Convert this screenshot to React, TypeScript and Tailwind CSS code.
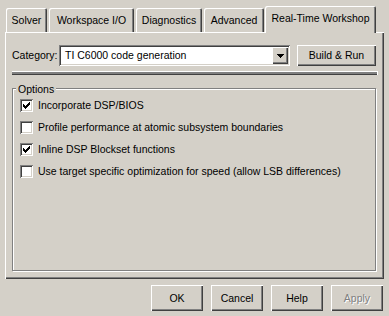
import React from 'react';

const raised =
  'shadow-[inset_1px_1px_0_#ffffff,inset_-1px_-1px_0_#404040,inset_-2px_-2px_0_#808080]';
const sunken =
  'shadow-[inset_1px_1px_0_#808080,inset_-1px_-1px_0_#ffffff,inset_2px_2px_0_#404040,inset_-2px_-2px_0_#d4d0c8]';

const tabs = [
  { name: 'Solver', w: 'w-[41px]', ml: 'ml-[1px]' },
  { name: 'Workspace I/O', w: 'w-[85px]', ml: 'ml-[2px]' },
  { name: 'Diagnostics', w: 'w-[66px]', ml: 'ml-[2px]' },
  { name: 'Advanced', w: 'w-[60px]', ml: 'ml-[2px]' },
];

const options = [
  { label: 'Incorporate DSP/BIOS', checked: true },
  { label: 'Profile performance at atomic subsystem boundaries', checked: false },
  { label: 'Inline DSP Blockset functions', checked: true },
  { label: 'Use target specific optimization for speed (allow LSB differences)', checked: false },
];

const Checkbox = ({ checked }: { checked: boolean }) => (
  <div className={`w-[13px] h-[13px] bg-white ${sunken} flex items-center justify-center shrink-0`}>
    {checked && (
      <svg width="7" height="7" viewBox="0 0 7 7" shapeRendering="crispEdges">
        <path d="M0 2h1v1h-1zM1 3h1v1h-1zM2 4h1v1h-1zM3 3h1v1h-1zM4 2h1v1h-1zM5 1h1v1h-1zM6 0h1v1h-1z" fill="#000" />
        <path d="M0 3h1v1h-1zM1 4h1v1h-1zM2 5h1v1h-1zM3 4h1v1h-1zM4 3h1v1h-1zM5 2h1v1h-1zM6 1h1v1h-1z" fill="#000" />
        <path d="M0 4h1v1h-1zM1 5h1v1h-1zM2 6h1v1h-1zM3 5h1v1h-1zM4 4h1v1h-1zM5 3h1v1h-1zM6 2h1v1h-1z" fill="#000" />
      </svg>
    )}
  </div>
);

export default function App() {
  return (
    <div
      className="w-[389px] h-[316px] bg-[#d4d0c8] text-[10.5px] text-black leading-none flex flex-col overflow-hidden"
      style={{ fontFamily: '"Liberation Sans", Arial, sans-serif' }}
    >
      {/* Tabs */}
      <div className="h-[26px] mt-[6px] flex items-end pl-[5px]">
        {tabs.map((t) => (
          <div
            key={t.name}
            className={`${t.w} ${t.ml} h-[24px] flex items-center justify-center rounded-t-[2px] shadow-[inset_1px_1px_0_#ffffff,inset_-1px_0_0_#404040,inset_-2px_0_0_#808080]`}
          >
            {t.name}
          </div>
        ))}
        <div className="w-[111px] ml-[1px] h-[27px] -mb-[1px] relative z-10 bg-[#d4d0c8] flex items-center justify-center pb-[2px] rounded-t-[2px] shadow-[inset_1px_1px_0_#ffffff,inset_-1px_0_0_#404040,inset_-2px_0_0_#808080]">
          Real-Time Workshop
        </div>
      </div>

      {/* Panel */}
      <div className="ml-[5px] w-[379px] h-[247px] shadow-[inset_1px_1px_0_#ffffff,inset_-1px_-1px_0_#404040,inset_-2px_-2px_0_#808080] pt-[13px] px-[7px] flex flex-col">
        <div className="flex items-center h-[21px]">
          <div className="w-[47px]">Category:</div>
          <div className={`w-[231px] h-[21px] bg-white ${sunken} flex items-center pl-[6px] pr-[2px]`}>
            <span className="flex-1">TI C6000 code generation</span>
            <div className={`w-[16px] h-[17px] bg-[#d4d0c8] ${raised} flex items-center justify-center`}>
              <svg width="7" height="4" viewBox="0 0 7 4" shapeRendering="crispEdges">
                <path d="M0 0h7L3.5 4z" fill="#000" />
              </svg>
            </div>
          </div>
          <div className={`ml-[7px] w-[79px] h-[21px] ${raised} flex items-center justify-center`}>
            Build &amp; Run
          </div>
        </div>

        <div className="mt-[5px] w-[365px] h-[4px] border-t border-white bg-[#808080] border-b border-b-[#404040] shadow-[1px_0_0_#ffffff]" />

        {/* Options group */}
        <div className="relative mt-[13px] w-[364px] h-[183px] border border-[#808080] shadow-[inset_1px_1px_0_#ffffff,1px_1px_0_#ffffff] pt-[10px] pl-[7px]">
          <div className="absolute -top-[6px] left-[3px] px-[2px] bg-[#d4d0c8] leading-[12px]">Options</div>
          <div className="flex flex-col gap-[9px]">
            {options.map((o) => (
              <div key={o.label} className="flex items-center gap-[5px] h-[13px]">
                <Checkbox checked={o.checked} />
                <span>{o.label}</span>
              </div>
            ))}
          </div>
        </div>
      </div>

      {/* Buttons */}
      <div className="mt-[6px] flex justify-end gap-[8px] pr-[6px]">
        {['OK', 'Cancel', 'Help'].map((b) => (
          <div key={b} className={`w-[52px] h-[26px] ${raised} flex items-center justify-center`}>
            {b}
          </div>
        ))}
        <div className={`w-[52px] h-[26px] ${raised} flex items-center justify-center text-[#808080] [text-shadow:1px_1px_0_#ffffff]`}>
          Apply
        </div>
      </div>
    </div>
  );
}
